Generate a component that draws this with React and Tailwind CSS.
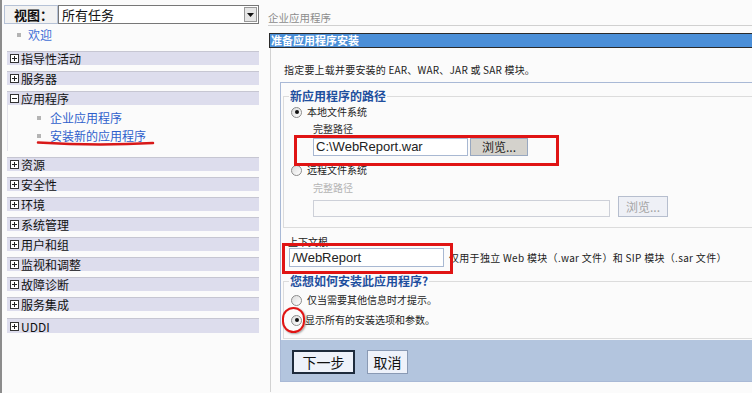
const cjk = "font-['Noto_Sans_CJK_SC','Liberation_Sans',sans-serif]"

const sections = ['资源', '安全性', '环境', '系统管理', '用户和组', '监视和调整', '故障诊断', '服务集成']

function Toggle({ open }) {
  return (
    <svg width="9" height="9" viewBox="0 0 9 9" className="shrink-0">
      <rect x="0.5" y="0.5" width="8" height="8" fill="#fff" stroke="#333" />
      <path d="M2 4.5h5" stroke="#222" />
      {!open && <path d="M4.5 2v5" stroke="#222" />}
    </svg>
  )
}

function Radio({ checked }) {
  return (
    <span className="inline-flex h-[11px] w-[11px] shrink-0 items-center justify-center rounded-full border border-[#8c8c8c] bg-linear-to-br from-[#dcdcdc] to-white">
      {checked && <span className="h-[4px] w-[4px] rounded-full bg-[#111]" />}
    </span>
  )
}

function Bar({ label, open, className = 'mt-[6px]' }) {
  return (
    <div className={`ml-[5px] flex h-[14px] items-center gap-[2px] border-t border-[#c6c6d2] bg-[#dddded] pl-[3px] ${className}`}>
      <Toggle open={open} />
      <span className="text-[12px] leading-[13px] text-[#111]">{label}</span>
    </div>
  )
}

function Bullet() {
  return <span className="h-[4px] w-[4px] shrink-0 bg-[#b4b4b4]" />
}

export default function App() {
  return (
    <div className={`flex h-[393px] w-[752px] overflow-hidden bg-[#fbfbfb] ${cjk}`}>
      {/* navigation */}
      <div className="relative w-[259px] shrink-0 border-l-2 border-[#8c8c8c]">
        <div className="flex pt-[5px]">
          <div className="ml-[2px] h-[19px] w-[54px] border border-[#b6c2d6] bg-[#f2f2f2] pl-[9px] text-[13px] font-bold leading-[17px] text-[#111]">
            视图：
          </div>
          <div className="flex h-[19px] flex-1 items-center justify-between border border-[#777] bg-white pl-[3px]">
            <span className="text-[13px] leading-[17px] text-[#111]">所有任务</span>
            <span className="mr-[1px] flex h-[15px] w-[13px] items-center justify-center border border-[#999] bg-[#e6e6e6]">
              <svg width="7" height="4" viewBox="0 0 7 4">
                <path d="M0 0h7L3.5 4z" fill="#111" />
              </svg>
            </span>
          </div>
        </div>

        <div className="mt-[4px] flex h-[14px] items-center gap-[7px] pl-[15px]">
          <Bullet />
          <span className="text-[12px] leading-[14px] text-[#3f6fd6]">欢迎</span>
        </div>

        <Bar label="指导性活动" className="mt-[9px]" />
        <Bar label="服务器" />
        <Bar label="应用程序" open />
        <div className="ml-[5px] border-l border-[#e2e2ea] pb-[8px] pt-[6px]">
          <div className="flex h-[14px] items-center gap-[9px] pl-[29px]">
            <Bullet />
            <span className="text-[12px] leading-[14px] text-[#2f5fcc]">企业应用程序</span>
          </div>
          <div className="mt-[4px] flex h-[14px] items-center gap-[9px] pl-[29px]">
            <Bullet />
            <span className="text-[12px] leading-[14px] text-[#2f5fcc]">安装新的应用程序</span>
          </div>
        </div>
        {sections.map((s) => (
          <Bar key={s} label={s} />
        ))}
        <Bar label="UDDI" className="mt-[7px] h-[15px]" />

        <svg className="absolute left-0 top-0" width="160" height="150" viewBox="0 0 160 150">
          <path d="M36 142.5 Q 95 146 151 143" fill="none" stroke="#d81818" strokeWidth="2.5" strokeLinecap="round" />
        </svg>
      </div>

      {/* content */}
      <div className="relative min-w-0 flex-1 pl-[9px]">
        <div className="h-[26px] border-b border-[#d0d0d0] pt-[12px] text-[10.5px] leading-[12px] text-[#8c8c8c]">
          企业应用程序
        </div>
        <div className="-mr-1 ml-[1px] mt-[7px] flex h-[15px] items-center border border-[#2a2a2a] bg-[#4b8fd8] pl-[1px] text-[11px] font-bold leading-[13px] text-white">
          准备应用程序安装
        </div>

        <div className="ml-[2px] h-[344px] border-l border-[#d2d2d2]">
          <p className="pl-[13px] pt-[16px] text-[10px] leading-[12px] tracking-[0.2px] text-[#222]">
            指定要上载并要安装的 EAR、WAR、JAR 或 SAR 模块。
          </p>

          <div className="-mr-1 ml-[9px] mt-[6px] border border-[#a9b9d6] bg-[#fbfbfb]">
            <fieldset className="ml-[2px] mt-[6px] border border-[#dcdcdc] pb-[10px]">
              <legend className="ml-[5px] px-[1px] text-[12px] font-bold leading-[14px] text-[#1f4f9e]">
                新应用程序的路径
              </legend>
              <div className="mt-[2px] flex h-[14px] items-center gap-[5px] pl-[7px]">
                <Radio checked />
                <span className="text-[10px] leading-[12px] text-[#222]">本地文件系统</span>
              </div>
              <div className="mt-[4px] h-[12px] pl-[29px] text-[10px] leading-[12px] text-[#333]">完整路径</div>
              <div className="mt-[3px] flex h-[18px] gap-[2px] pl-[29px]">
                <div className="flex w-[155px] items-center border border-[#a8b8d2] bg-white pl-[2px] font-['Liberation_Sans',sans-serif] text-[13px] text-[#222]">
                  C:\WebReport.war
                </div>
                <div className="flex w-[58px] items-center justify-center border border-[#98a8c0] bg-[#d4d2cc] text-[12px] leading-[14px] text-[#222]">
                  浏览...
                </div>
              </div>
              <div className="mt-[7px] flex h-[14px] items-center gap-[5px] pl-[7px]">
                <Radio />
                <span className="text-[10px] leading-[12px] text-[#222]">远程文件系统</span>
              </div>
              <div className="mt-[5px] h-[12px] pl-[29px] text-[10px] leading-[12px] text-[#b4b4b4]">完整路径</div>
              <div className="mt-[2px] flex h-[21px] items-end gap-[8px] pl-[29px]">
                <div className="h-[17px] w-[297px] border border-[#cdd0d8] bg-[#fafafa]" />
                <div className="flex h-[21px] w-[50px] items-center justify-center border border-[#b6bece] bg-[#eef0f6] text-[12px] leading-[14px] text-[#a4a4a4]">
                  浏览...
                </div>
              </div>
            </fieldset>

            <div className="mt-[8px] h-[12px] pl-[7px] text-[10px] leading-[12px] text-[#222]">上下文根</div>
            <div className="flex h-[19px] items-center gap-[5px] pl-[8px]">
              <div className="flex h-[19px] w-[155px] items-center border border-[#a8b8d2] bg-white pl-[2px] font-['Liberation_Sans',sans-serif] text-[13px] text-[#222]">
                /WebReport
              </div>
              <span className="whitespace-nowrap text-[10px] leading-[12px] tracking-[0.3px] text-[#222]">
                仅用于独立 Web 模块（.war 文件）和 SIP 模块（.sar 文件）
              </span>
            </div>

            <fieldset className="ml-[2px] mt-[7px] border border-[#dcdcdc] pb-[11px]">
              <legend className="ml-[5px] px-[1px] text-[12px] font-bold leading-[14px] text-[#1f4f9e]">
                您想如何安装此应用程序?
              </legend>
              <div className="mt-[5px] flex h-[14px] items-center gap-[5px] pl-[7px]">
                <Radio />
                <span className="text-[10px] leading-[12px] text-[#222]">仅当需要其他信息时才提示。</span>
              </div>
              <div className="mt-[6px] flex h-[14px] items-center gap-[3px] pl-[7px]">
                <Radio checked />
                <span className="text-[10px] leading-[12px] text-[#222]">显示所有的安装选项和参数。</span>
              </div>
            </fieldset>

            <div className="mt-[1px] flex h-[41px] items-start gap-[12px] bg-[#b3c5de] pl-[11px] pt-[10px]">
              <button className="h-[24px] w-[63px] border-2 border-[#1e2b3c] bg-[#eef2fa] text-[14px] leading-[18px] text-[#111]">
                下一步
              </button>
              <button className="h-[24px] w-[41px] border border-[#8a9ab4] bg-[#eef2fa] text-[14px] leading-[18px] text-[#111]">
                取消
              </button>
            </div>
          </div>
        </div>

        {/* annotations */}
        <div className="absolute left-[35px] top-[135px] h-[31px] w-[265px] border-[3px] border-[#e01414]" />
        <div className="absolute left-[23px] top-[243px] h-[31px] w-[171px] border-[3px] border-[#e01414]" />
        <div className="absolute left-[23px] top-[307px] h-[26px] w-[23px] rounded-full border-2 border-[#e01414] shadow-[1px_1px_2px_rgba(0,0,0,0.35)]" />
      </div>
    </div>
  )
}
